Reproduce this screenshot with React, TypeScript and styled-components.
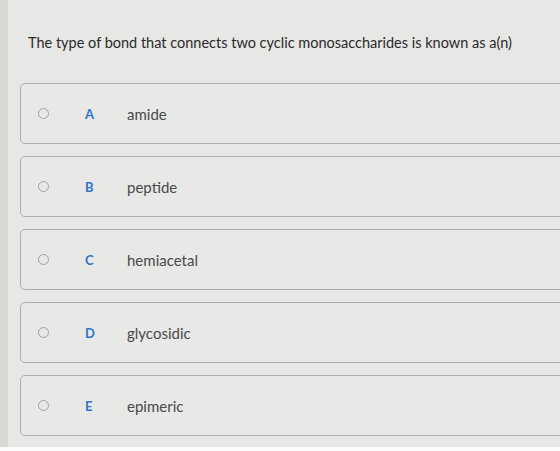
import React from 'react';
import styled, { createGlobalStyle } from 'styled-components';

interface IChoice {
  letter: string;
  text: string;
}

const choices: IChoice[] = [
  { letter: 'A', text: 'amide' },
  { letter: 'B', text: 'peptide' },
  { letter: 'C', text: 'hemiacetal' },
  { letter: 'D', text: 'glycosidic' },
  { letter: 'E', text: 'epimeric' },
];

const GlobalStyle = createGlobalStyle`
  html, body {
    margin: 0;
    padding: 0;
    background: #fbfbfa;
  }
`;

const Page = styled.div`
  width: 560px;
  height: 447px;
  overflow: hidden;
  display: flex;
  background: #e7e7e5;
  font-family: Lato, 'Open Sans', sans-serif;
`;

const Edge = styled.div`
  width: 8px;
  flex: none;
  background: #d9d7d4;
`;

const Content = styled.main`
  flex: 1;
  display: flex;
  flex-direction: column;
  padding: 33px 0 0 12px;
`;

const Question = styled.p`
  margin: 0 0 31px 8px;
  font-size: 14.5px;
  line-height: 19px;
  color: #2a2a2a;
`;

const ChoiceList = styled.ul`
  list-style: none;
  margin: 0;
  padding: 0;
  display: flex;
  flex-direction: column;
  gap: 12px;
  margin-right: -20px;
`;

const ChoiceCard = styled.li`
  height: 61px;
  box-sizing: border-box;
  display: flex;
  align-items: center;
  padding-left: 17px;
  border: 1px solid #adadab;
  border-radius: 5px;
  background: #e8e8e6;
`;

const Radio = styled.span`
  width: 9px;
  height: 9px;
  flex: none;
  border: 1.5px solid #a3a3a1;
  border-radius: 50%;
`;

const Letter = styled.span`
  width: 42px;
  margin-left: 36px;
  font-size: 13px;
  font-weight: 700;
  color: #2f74c6;
`;

const ChoiceText = styled.span`
  font-size: 15px;
  color: #4a4a4a;
`;

const App: React.FC = () => (
  <>
    <GlobalStyle />
    <Page>
      <Edge />
      <Content>
        <Question>
          The type of bond that connects two cyclic monosaccharides is known as a(n)
        </Question>
        <ChoiceList>
          {choices.map((choice) => (
            <ChoiceCard key={choice.letter}>
              <Radio />
              <Letter>{choice.letter}</Letter>
              <ChoiceText>{choice.text}</ChoiceText>
            </ChoiceCard>
          ))}
        </ChoiceList>
      </Content>
    </Page>
  </>
);

export default App;
